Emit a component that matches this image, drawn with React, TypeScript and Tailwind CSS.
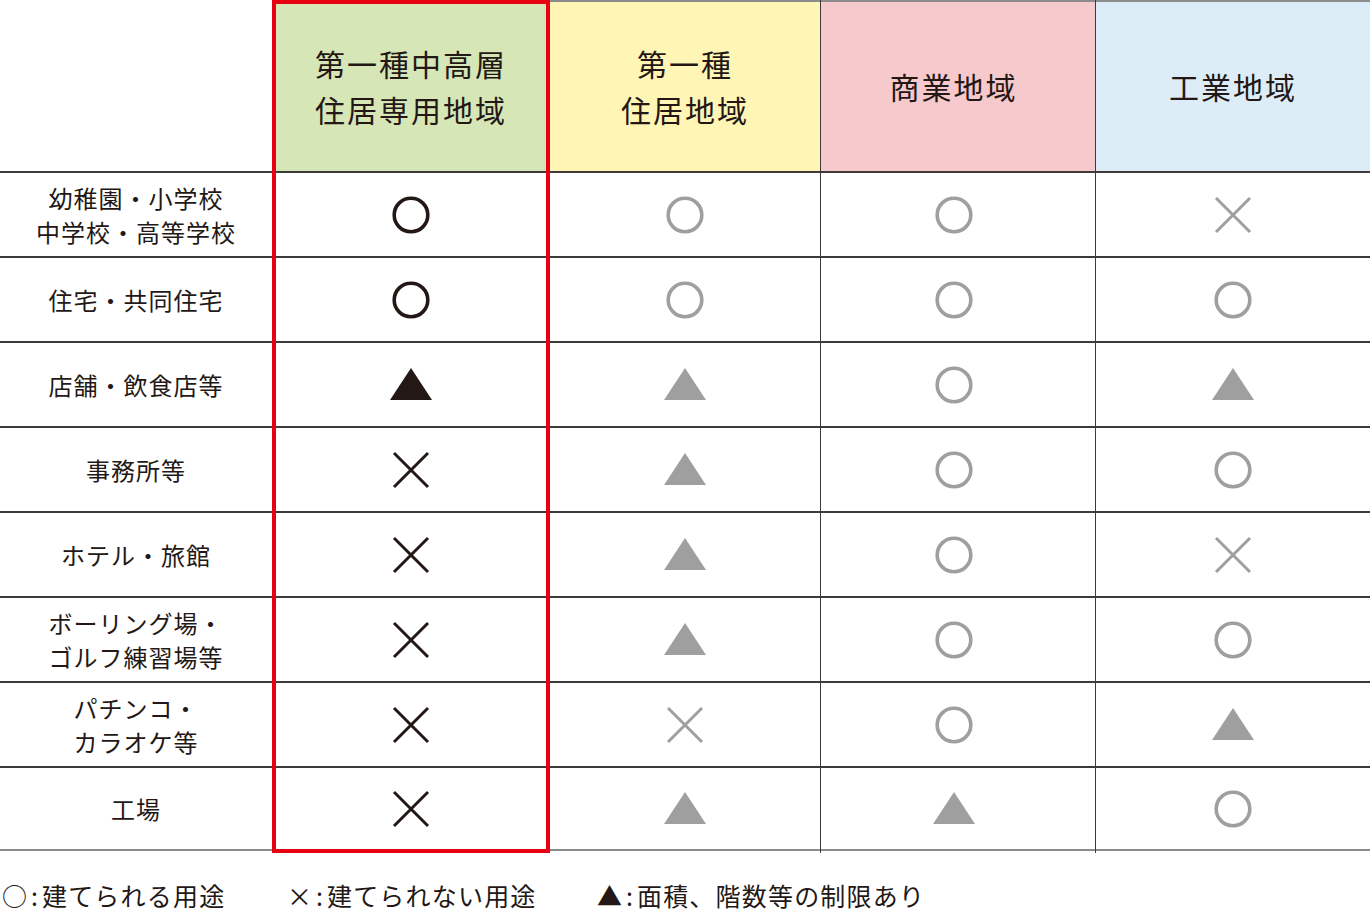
import type { FC } from 'react';

type Mark = 'o' | 'x' | 't';

const ink = '#231815';
const gray = '#9f9f9f';

const rows: { label: string[]; marks: Mark[] }[] = [
    { label: ['幼稚園・小学校', '中学校・高等学校'], marks: ['o', 'o', 'o', 'x'] },
    { label: ['住宅・共同住宅'], marks: ['o', 'o', 'o', 'o'] },
    { label: ['店舗・飲食店等'], marks: ['t', 't', 'o', 't'] },
    { label: ['事務所等'], marks: ['x', 't', 'o', 'o'] },
    { label: ['ホテル・旅館'], marks: ['x', 't', 'o', 'x'] },
    { label: ['ボーリング場・', 'ゴルフ練習場等'], marks: ['x', 't', 'o', 'o'] },
    { label: ['パチンコ・', 'カラオケ等'], marks: ['x', 'x', 'o', 't'] },
    { label: ['工場'], marks: ['x', 't', 't', 'o'] },
];

const Symbol: FC<{ mark: Mark; color: string }> = ({ mark, color }) => {
    if (mark === 'o') {
        return (
            <svg width="40" height="40" viewBox="0 0 40 40">
                <circle cx="20" cy="20" r="16.8" fill="none" stroke={color} strokeWidth="3.6" />
            </svg>
        );
    }
    if (mark === 'x') {
        return (
            <svg width="40" height="40" viewBox="0 0 40 40">
                <path d="M3 3 L37 37 M37 3 L3 37" stroke={color} strokeWidth="3" />
            </svg>
        );
    }
    return (
        <svg width="42" height="32" viewBox="0 0 42 32" className="mt-[-2px]">
            <polygon points="21,0 42,32 0,32" fill={color} />
        </svg>
    );
};

const Cell: FC<{ children?: React.ReactNode; last?: boolean; short?: boolean; className?: string }> = ({
    children,
    last,
    short,
    className = '',
}) => (
    <div
        className={`${short ? 'h-[83px]' : 'h-[85px]'} flex items-center justify-center border-t-2 border-t-[#3e3a39] ${last ? 'border-b-2 border-b-[#8c8c8c]' : ''} ${className}`}
    >
        {children}
    </div>
);

const headers = [
    { lines: ['第一種', '住居地域'], bg: 'bg-[#fff5b5]', w: 'w-[270px]', border: '', pad: '' },
    { lines: ['商業地域'], bg: 'bg-[#f6c9cc]', w: 'w-[275px]', border: 'border-l border-l-[#3e3a39]', pad: 'pr-[9px]' },
    { lines: ['工業地域'], bg: 'bg-[#ddedf7]', w: 'w-[275px]', border: 'border-l border-l-[#3e3a39]', pad: '' },
];

const LegendItem: FC<{ mark: string; text: string; className?: string }> = ({ mark, text, className = '' }) => (
    <div className={`flex ${className}`}>
        <span>{mark}</span>
        <span className="mx-[4px]">:</span>
        <span className="tracking-[1.2px]">{text}</span>
    </div>
);

export default function App() {
    return (
        <main
            className="w-[1370px] h-[920px] bg-white text-[#231815] overflow-hidden"
            style={{ fontFamily: '"Noto Sans CJK JP", "Noto Sans", sans-serif' }}
        >
            <div className="flex">
                {/* row labels */}
                <div className="w-[272px] flex flex-col">
                    <div className="h-[171px]" />
                    {rows.map((r, i) => (
                        <Cell key={i} last={i === rows.length - 1}>
                            <div className="text-center text-[24px] leading-[34px] tracking-[1px]">
                                {r.label.map((l) => (
                                    <div key={l}>{l}</div>
                                ))}
                            </div>
                        </Cell>
                    ))}
                </div>

                {/* highlighted column */}
                <div className="w-[278px] flex flex-col border-4 border-[#e60012]">
                    <div className="h-[167px] bg-[#d6e6b6] flex flex-col items-center justify-center pb-[4px] text-[30px] leading-[46px] tracking-[2px]">
                        <div>第一種中高層</div>
                        <div>住居専用地域</div>
                    </div>
                    {rows.map((r, i) => (
                        <Cell key={i} short={i === rows.length - 1}>
                            <Symbol mark={r.marks[0]} color={ink} />
                        </Cell>
                    ))}
                </div>

                {headers.map((h, c) => (
                    <div key={c} className={`${h.w} flex flex-col ${h.border}`}>
                        <div
                            className={`h-[171px] border-t-2 border-t-[#8c8c8c] ${h.bg} ${h.pad} flex flex-col items-center justify-center pb-[2px] text-[30px] leading-[46px] tracking-[2px]`}
                        >
                            {h.lines.map((l) => (
                                <div key={l}>{l}</div>
                            ))}
                        </div>
                        {rows.map((r, i) => (
                            <Cell key={i} last={i === rows.length - 1} className={h.pad}>
                                <Symbol mark={r.marks[c + 1]} color={gray} />
                            </Cell>
                        ))}
                    </div>
                ))}
            </div>

            {/* legend */}
            <div className="flex pt-[26px] pl-[2px] text-[25px] leading-[32px]">
                <LegendItem className="w-[285px]" mark="○" text="建てられる用途" />
                <LegendItem className="w-[310px]" mark="×" text="建てられない用途" />
                <LegendItem mark="▲" text="面積、階数等の制限あり" />
            </div>
        </main>
    );
}
